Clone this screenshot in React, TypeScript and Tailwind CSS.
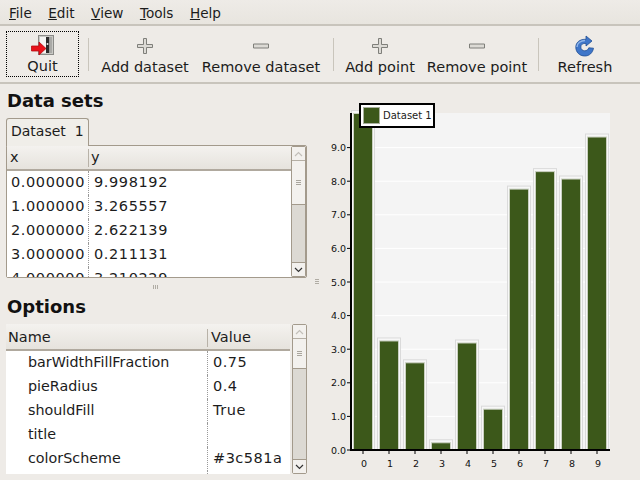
import React from "react";

function Plus() {
  return (
    <svg width="16" height="16" viewBox="0 0 16 16">
      <path d="M6.5 .5h3v6h6v3h-6v6h-3v-6h-6v-3h6z" fill="#dcdad5" stroke="#7f7f7a" />
    </svg>
  );
}
function Minus() {
  return (
    <svg width="16" height="16" viewBox="0 0 16 16">
      <path d="M.5 6h15v4H.5z" fill="#dcdad5" stroke="#7f7f7a" />
    </svg>
  );
}
function QuitIcon() {
  return (
    <svg width="24" height="21" viewBox="0 0 24 21">
      <rect x="7.5" y=".5" width="15" height="19" fill="#c9c9c5" stroke="#8b8b88" />
      <rect x="9" y="2" width="12" height="16" fill="#f4f4f2" />
      <path d="M15 2h3.500v16H15z" fill="#2a2a2a" />
      <path d="M18.500 2H21v16h-2.500z" fill="#a9a9a6" />
      <circle cx="16.500" cy="9" r="1" fill="#eee" />
      <path d="M.5 11h7.500V7l7 6.500-7 6.500v-4H.5z" fill="#e8121a" stroke="#b80c12" strokeWidth=".8" />
    </svg>
  );
}
function RefreshIcon() {
  return (
    <svg width="20" height="22" viewBox="0 0 20 22">
      <path d="M11 1l6 5-6 5V8.500c-3-.6-5.200 1-5.200 3.500 0 2.300 1.800 3.800 3.900 3.800 1.900 0 3.400-1 4.100-3l4.700 .4C17.600 18 14.300 21 9.800 21 4.500 21 .8 17.200.8 12.200.8 7.300 5 4 11 4.300z" fill="#3f76c9" stroke="#214f94" strokeWidth=".8" />
      <path d="M2 12c0-4 4-6.500 8-6.500" stroke="#8fb4e8" strokeWidth="1.500" fill="none" />
    </svg>
  );
}
function Tool({ icon, label, className }: { icon: React.ReactNode; label: string; className: string }) {
  return (
    <div className={`flex flex-col items-center shrink-0 whitespace-nowrap ${className}`}>
      <div className="h-[26px] flex items-center justify-center">{icon}</div>
      <span className="leading-[17px]">{label}</span>
    </div>
  );
}
function Sep({ className = "" }: { className?: string }) {
  return <div className={`w-px h-[33px] bg-[#c9c5bc] shrink-0 ${className}`} />;
}
function Scroll({ thumb, className }: { thumb: string; className: string }) {
  return (
    <div className={`flex flex-col border border-[#a39a8c] rounded-[2px] bg-[#dcd9d3] shrink-0 ${className}`}>
      <div className="h-[14px] bg-[#f3f1ee] border-b border-[#b5afa5] flex items-center justify-center shrink-0">
        <svg width="9" height="6" viewBox="0 0 9 6"><path d="M1 5l3.500-3.500L8 5" fill="none" stroke="#c2bfb9" strokeWidth="1.200" /></svg>
      </div>
      <div className={`bg-[#f3f1ee] border-b border-[#a39a8c] flex flex-col items-center justify-center gap-[1px] shrink-0 ${thumb}`}>
        <div className="w-[5px] h-px bg-[#a9a59d]" />
        <div className="w-[5px] h-px bg-[#a9a59d]" />
        <div className="w-[5px] h-px bg-[#a9a59d]" />
      </div>
      <div className="flex-1" />
      <div className="h-[14px] bg-[#f3f1ee] border-t border-[#a39a8c] flex items-center justify-center shrink-0">
        <svg width="9" height="6" viewBox="0 0 9 6"><path d="M1 1l3.500 3.500L8 1" fill="none" stroke="#333" strokeWidth="1.200" /></svg>
      </div>
    </div>
  );
}
function HeaderCell({ children, className }: { children: React.ReactNode; className: string }) {
  return <div className={`flex items-center shrink-0 ${className}`}>{children}</div>;
}

const rows = [
  ["0.000000", "9.998192"],
  ["1.000000", "3.265557"],
  ["2.000000", "2.622139"],
  ["3.000000", "0.211131"],
  ["4.000000", "3.210229"],
];
const opts = [
  ["barWidthFillFraction", "0.75"],
  ["pieRadius", "0.4"],
  ["shouldFill", "True"],
  ["title", ""],
  ["colorScheme", "#3c581a"],
];
const vals = [10, 3.23, 2.58, 0.2, 3.17, 1.2, 7.75, 8.27, 8.05, 9.3];

function Chart() {
  const sc = 33.6;
  const labelFont = "'DejaVu Sans', sans-serif";
  return (
    <svg width="310" height="370" viewBox="0 0 310 370" className="block">
      <rect x="20" y="3" width="260" height="337" fill="#f4f4f4" />
      {Array.from({ length: 10 }).map((_, i) => (
        <line key={i} x1="20" x2="280" y1={340 - i * sc} y2={340 - i * sc} stroke="#ffffff" strokeWidth="1" />
      ))}
      {vals.map((v, i) => {
        const x = 24 + i * 26;
        const top = 340 - v * sc;
        return (
          <g key={i}>
            <rect x={x - 2.5} y={top - 3.5} width="23" height={v * sc + 3.5} fill="#f7f7f7" stroke="#dadada" />
            <rect x={x - .5} y={top - .5} width="19" height={v * sc + .5} fill="#3c581a" stroke="#c9cfc0" />
          </g>
        );
      })}
      <line x1="21" x2="21" y1="3" y2="341" stroke="#000" strokeWidth="2" />
      <line x1="20" x2="280" y1="340" y2="340" stroke="#000" strokeWidth="2" />
      {Array.from({ length: 10 }).map((_, i) => (
        <g key={i}>
          <line x1="17" x2="20" y1={340 - i * sc} y2={340 - i * sc} stroke="#000" />
          <text x="16" y={343.500 - i * sc} textAnchor="end" fontSize="9.500" fontFamily={labelFont} fill="#111">{i}.0</text>
          <line x1={33 + i * 26} x2={33 + i * 26} y1="341" y2="344" stroke="#000" />
          <text x={34 + i * 26} y="357" textAnchor="middle" fontSize="9.500" fontFamily={labelFont} fill="#111">{i}</text>
        </g>
      ))}
    </svg>
  );
}

export default function App() {
  return (
    <div className="w-[640px] h-[480px] overflow-hidden flex flex-col bg-[#eeebe7] text-[#1c1c1c] text-[14.500px] font-['DejaVu_Sans',sans-serif]">
      {/* menu */}
      <div className="h-[26px] shrink-0 flex items-center gap-[16.500px] pl-[9px] pt-[2px] text-[13.600px] border-b-2 border-[#c8c4bc] bg-gradient-to-b from-[#eeebe7] to-[#e8e5df]">
        <span><u>F</u>ile</span>
        <span><u>E</u>dit</span>
        <span><u>V</u>iew</span>
        <span><u>T</u>ools</span>
        <span><u>H</u>elp</span>
      </div>
      {/* toolbar */}
      <div className="h-[58px] shrink-0 flex items-center pl-[6px] border-b-2 border-[#c8c4bc]">
        <Tool icon={<QuitIcon />} label="Quit" className="w-[73px] h-[46px] border border-dotted border-black" />
        <Sep className="ml-[9px]" />
        <Tool icon={<Plus />} label="Add dataset" className="w-[88px] ml-[12px]" />
        <Tool icon={<Minus />} label="Remove dataset" className="w-[120px] ml-[12px]" />
        <Sep className="ml-[12px]" />
        <Tool icon={<Plus />} label="Add point" className="w-[68px] ml-[12px]" />
        <Tool icon={<Minus />} label="Remove point" className="w-[100px] ml-[13px]" />
        <Sep className="ml-[11px]" />
        <Tool icon={<RefreshIcon />} label="Refresh" className="w-[56px] ml-[18px]" />
      </div>
      {/* body */}
      <div className="flex-1 min-h-0 flex">
        <div className="w-[301px] ml-[6px] shrink-0 flex flex-col">
          <div className="h-[33px] mb-[1px] pl-[1px] shrink-0 flex items-center font-bold text-[18px] text-[#111]">Data sets</div>
          <div className="h-[28px] -mb-[1px] pb-[2px] w-[83px] shrink-0 border border-b-0 border-[#a39a8c] rounded-t-[3px] bg-[#f0eee9] px-[4px] flex items-center z-10 whitespace-pre text-[14px]">Dataset  1</div>
          <div className="h-[133px] shrink-0 flex border border-[#a39a8c] rounded-[2px] bg-[#eeebe7]">
            <div className="w-[284px] shrink-0 flex flex-col bg-white overflow-hidden">
              <div className="h-[25px] shrink-0 flex items-center border-b-2 border-[#b0a99e] bg-gradient-to-b from-[#f4f2ef] to-[#e6e3dd]">
                <HeaderCell className="w-[82px] pl-[3px] border-r border-[#b8b2a8] h-[18px]">x</HeaderCell>
                <HeaderCell className="pl-[2px]">y</HeaderCell>
              </div>
              {rows.map((r) => (
                <div key={r[0]} className="h-[24px] shrink-0 flex items-center tracking-[0.6px]">
                  <div className="w-[82px] pl-[4px] h-full flex items-center border-r border-dotted border-[#999] shrink-0">{r[0]}</div>
                  <div className="pl-[5px]">{r[1]}</div>
                </div>
              ))}
            </div>
            <Scroll thumb="h-[44px]" className="w-[15px]" />
          </div>
          <div className="h-[18px] shrink-0 flex items-center justify-center pr-[2px]">
            <div className="w-px h-[4px] bg-[#b0aca4]" /><div className="w-px h-[4px] bg-[#b0aca4] ml-[1px]" /><div className="w-px h-[4px] bg-[#b0aca4] ml-[1px]" />
          </div>
          <div className="h-[20px] pl-[1px] shrink-0 flex items-center font-bold text-[18px] text-[#111]">Options</div>
          <div className="h-[150px] shrink-0 flex mt-[8px]">
            <div className="w-[284px] shrink-0 flex flex-col bg-white overflow-hidden">
              <div className="h-[27px] pt-[2px] shrink-0 flex items-center border-b-2 border-[#b0a99e] bg-gradient-to-b from-[#f4f2ef] to-[#e6e3dd]">
                <HeaderCell className="w-[202px] pl-[2px] border-r border-[#b8b2a8] h-[18px]">Name</HeaderCell>
                <HeaderCell className="pl-[3px]">Value</HeaderCell>
              </div>
              {opts.map((r) => (
                <div key={r[0]} className="h-[24px] shrink-0 flex items-center">
                  <div className="w-[202px] pl-[22px] h-full flex items-center border-r border-dotted border-[#999] shrink-0 text-[14.300px]">{r[0]}</div>
                  <div className="pl-[5px] tracking-[0.5px]">{r[1]}</div>
                </div>
              ))}
              <div className="flex-1 flex"><div className="w-[202px] border-r border-dotted border-[#999]" /></div>
            </div>
            <Scroll thumb="h-[30px]" className="w-[15px] ml-[2px]" />
          </div>
        </div>
        <div className="flex-1 min-w-0 relative">
          <div className="absolute left-[8px] top-[195px] flex flex-col">
            <div className="w-[4px] h-px bg-[#b0aca4]" /><div className="w-[4px] h-px bg-[#b0aca4] mt-[1px]" /><div className="w-[4px] h-px bg-[#b0aca4] mt-[1px]" />
          </div>
          <div className="ml-[23px] mt-[26px]"><Chart /></div>
          <div className="absolute left-[52px] top-[19px] h-[25px] w-[76px] border-[2px] border-black bg-white flex items-center pl-[2px] gap-[3px] text-[10px]">
            <div className="w-[17px] h-[17px] bg-[#3c581a] border border-[#a9b09e] shrink-0" />
            <span className="whitespace-nowrap">Dataset 1</span>
          </div>
        </div>
      </div>
    </div>
  );
}
